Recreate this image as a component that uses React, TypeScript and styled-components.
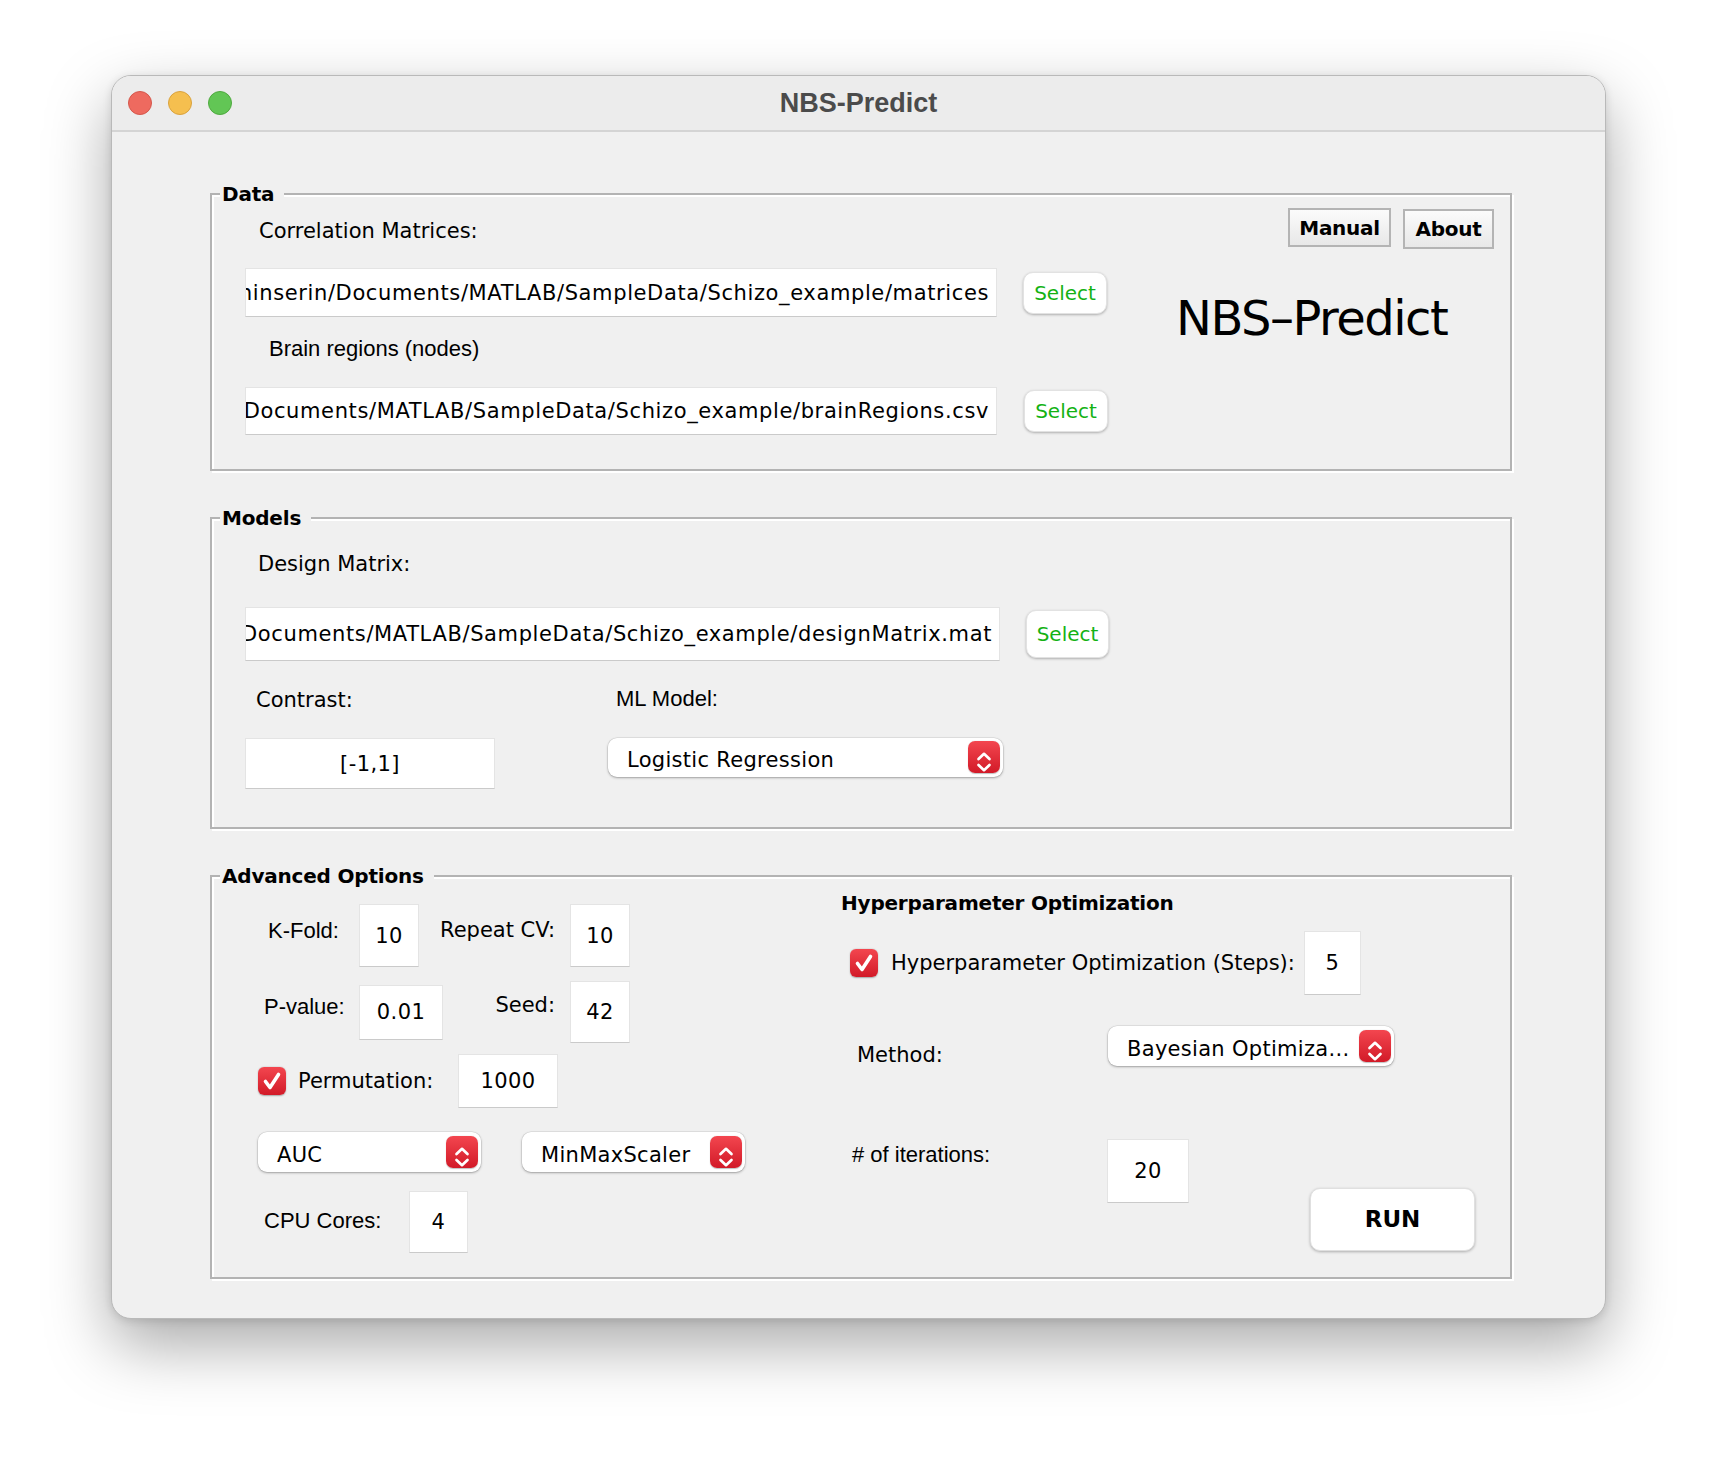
import React from "react";
import styled, { createGlobalStyle } from "styled-components";

const GlobalStyle = createGlobalStyle`
  html, body { margin: 0; padding: 0; background: #ffffff; }
  body { font-family: "DejaVu Sans", "Liberation Sans", sans-serif; color: #000; }
  * { box-sizing: border-box; }
`;

const Page = styled.div`
  width: 1716px;
  height: 1466px;
  padding: 75px 0 0 111px;
  overflow: hidden;
`;

const Window = styled.div`
  width: 1495px;
  height: 1244px;
  background: #f0f0f0;
  border: 1px solid #b9b9b9;
  border-radius: 20px;
  box-shadow: 0 26px 64px rgba(0, 0, 0, 0.34), 0 2px 8px rgba(0, 0, 0, 0.12);
  overflow: hidden;
  display: flex;
  flex-direction: column;
`;

const TitleBar = styled.div`
  flex-shrink: 0;
  height: 56px;
  display: grid;
  grid-template-columns: 1fr auto 1fr;
  align-items: center;
  padding: 0 16px;
  background: #ececec;
  border-bottom: 2px solid #d4d4d4;
`;

const Lights = styled.div`
  display: flex;
  gap: 16px;
`;

const Light = styled.span<{ $bg: string; $edge: string }>`
  width: 24px;
  height: 24px;
  border-radius: 50%;
  background: ${(p) => p.$bg};
  border: 1px solid ${(p) => p.$edge};
`;

const WindowTitle = styled.div`
  font-family: "Liberation Sans", Arial, sans-serif;
  font-weight: 700;
  font-size: 27px;
  color: #4b4b4b;
`;

const Content = styled.div`
  flex: 1;
  padding: 61px 93px 0 98px;
  display: flex;
  flex-direction: column;
  gap: 46px;
`;

const Box = styled.section<{ $h: number }>`
  position: relative;
  flex-shrink: 0;
  height: ${(p) => p.$h}px;
  border: 2px solid #b3b3b3;
  box-shadow: 2px 2px 0 #ffffff, inset 2px 2px 0 #ffffff;
`;

const Legend = styled.h2`
  position: absolute;
  top: -13px;
  left: 8px;
  margin: 0;
  padding: 0 10px 0 2px;
  background: #f0f0f0;
  font-family: "DejaVu Sans", sans-serif;
  font-weight: 700;
  font-size: 20px;
  line-height: 25px;
  letter-spacing: -0.2px;
`;

const Label = styled.div<{ $helv?: boolean; $mt?: number; $ml?: number; $w?: number; $end?: boolean; $mr?: number }>`
  font-family: ${(p) => (p.$helv ? '"Liberation Sans", Arial, sans-serif' : '"DejaVu Sans", sans-serif')};
  font-size: ${(p) => (p.$helv ? 22 : 21)}px;
  letter-spacing: 0;
  line-height: 25px;
  white-space: nowrap;
  margin-top: ${(p) => p.$mt ?? 0}px;
  margin-left: ${(p) => p.$ml ?? 0}px;
  margin-right: ${(p) => p.$mr ?? 0}px;
  ${(p) => (p.$w ? `width: ${p.$w}px; flex-shrink: 0;` : "")}
  ${(p) => (p.$end ? "justify-self: end;" : "")}
  align-self: start;
`;

const DataBody = styled.div`
  display: flex;
  height: 100%;
  padding: 0 16px 0 33px;
`;

const PathColumn = styled.div`
  width: 862px;
  flex-shrink: 0;
  display: flex;
  flex-direction: column;
`;

const PathRow = styled.div<{ $mt: number; $gap?: number }>`
  display: flex;
  align-items: center;
  gap: ${(p) => p.$gap ?? 26}px;
  margin-top: ${(p) => p.$mt}px;
`;

const PathField = styled.div<{ $w: number; $h: number }>`
  width: ${(p) => p.$w}px;
  height: ${(p) => p.$h}px;
  flex-shrink: 0;
  background: #ffffff;
  border: 1px solid #e4e4e4;
  border-bottom-color: #cacaca;
  display: flex;
  justify-content: flex-end;
  align-items: center;
  overflow: hidden;
  padding-right: 7px;
  font-size: 21px;
  letter-spacing: 0.62px;
  white-space: nowrap;
  & > span { flex-shrink: 0; }
`;

const SelectButton = styled.button<{ $w?: number; $h?: number }>`
  width: ${(p) => p.$w ?? 84}px;
  height: ${(p) => p.$h ?? 42}px;
  flex-shrink: 0;
  border: 1px solid #e2e2e2;
  border-radius: 10px;
  background: #ffffff;
  box-shadow: 0 1px 2.5px rgba(0, 0, 0, 0.28);
  color: #14b214;
  font-family: "DejaVu Sans", sans-serif;
  font-size: 20px;
  padding: 0;
`;

const Aside = styled.div`
  flex: 1;
  display: flex;
  flex-direction: column;
`;

const HelpButtons = styled.div`
  margin-top: 13px;
  height: 41px;
  display: flex;
  justify-content: flex-end;
  align-items: flex-start;
  gap: 12px;
`;

const HelpButton = styled.button<{ $w: number; $h: number; $mt?: number }>`
  width: ${(p) => p.$w}px;
  height: ${(p) => p.$h}px;
  margin-top: ${(p) => p.$mt ?? 0}px;
  padding: 0;
  border: 2px solid #b4b4b4;
  border-radius: 0;
  background: linear-gradient(#fbfbfb, #e8e8e8);
  font-family: "DejaVu Sans", sans-serif;
  font-weight: 700;
  font-size: 20px;
  letter-spacing: -0.3px;
  color: #000;
`;

const BigTitle = styled.div`
  margin-top: 41px;
  margin-left: 69px;
  font-family: "DejaVu Sans", sans-serif;
  font-size: 48px;
  line-height: 56px;
  letter-spacing: -1.5px;
  white-space: nowrap;
`;

const ModelsBody = styled.div`
  display: flex;
  flex-direction: column;
  padding-left: 33px;
`;

const ModelRow = styled.div`
  display: flex;
`;

const Column = styled.div<{ $w?: number; $ml?: number }>`
  display: flex;
  flex-direction: column;
  ${(p) => (p.$w ? `width: ${p.$w}px;` : "")}
  margin-left: ${(p) => p.$ml ?? 0}px;
`;

const NumField = styled.div<{ $w: number; $h: number; $mt?: number }>`
  width: ${(p) => p.$w}px;
  height: ${(p) => p.$h}px;
  margin-top: ${(p) => p.$mt ?? 0}px;
  flex-shrink: 0;
  background: #ffffff;
  border: 1px solid #e4e4e4;
  border-bottom-color: #cacaca;
  display: flex;
  align-items: center;
  justify-content: center;
  font-size: 21px;
  letter-spacing: 0.4px;
  align-self: center;
`;

const ComboBox = styled.div<{ $w: number; $h?: number; $mt?: number }>`
  width: ${(p) => p.$w}px;
  height: ${(p) => p.$h ?? 40}px;
  margin-top: ${(p) => p.$mt ?? 0}px;
  flex-shrink: 0;
  display: flex;
  align-items: center;
  justify-content: space-between;
  padding: 0 3px 0 19px;
  background: #ffffff;
  border-radius: 9px;
  box-shadow: 0 1px 2.5px rgba(0, 0, 0, 0.3), 0 0 0 0.5px rgba(0, 0, 0, 0.1);
  font-size: 21px;
  letter-spacing: 0.3px;
  white-space: nowrap;
  & > span { padding-top: 5px; }
`;

const StepperBox = styled.span`
  width: 32px;
  height: 32px;
  flex-shrink: 0;
  border-radius: 7px;
  background: linear-gradient(#f3464f, #d21a28);
  display: flex;
  box-shadow: 0 0.5px 1px rgba(0, 0, 0, 0.25);
`;

const CheckBoxBox = styled.span<{ $ml?: number }>`
  width: 28px;
  height: 28px;
  flex-shrink: 0;
  margin-left: ${(p) => p.$ml ?? 0}px;
  border-radius: 6px;
  background: linear-gradient(#f3464f, #d21a28);
  box-shadow: 0 0.5px 1.5px rgba(0, 0, 0, 0.3);
  display: flex;
`;

const AdvancedBody = styled.div`
  display: flex;
  height: 100%;
`;

const LeftPane = styled.div`
  width: 629px;
  flex-shrink: 0;
  padding: 27px 0 0 33px;
  display: flex;
  flex-direction: column;
`;

const ParamGrid = styled.div`
  display: grid;
  grid-template-columns: 114px 84px 127px 60px;
  grid-template-rows: 63px 62px;
  row-gap: 14px;
`;

const FlexRow = styled.div<{ $mt: number; $ml?: number; $gap?: number; $start?: boolean; $h?: number }>`
  display: flex;
  align-items: ${(p) => (p.$start ? "flex-start" : "center")};
  margin-top: ${(p) => p.$mt}px;
  margin-left: ${(p) => p.$ml ?? 0}px;
  gap: ${(p) => p.$gap ?? 0}px;
  ${(p) => (p.$h ? `height: ${p.$h}px;` : "")}
`;

const RightPane = styled.div`
  flex: 1;
  padding-top: 14px;
  display: flex;
  flex-direction: column;
`;

const SubTitle = styled.h3`
  margin: 0;
  font-family: "DejaVu Sans", sans-serif;
  font-weight: 700;
  font-size: 20px;
  line-height: 25px;
  letter-spacing: -0.2px;
`;

const RunButton = styled.button<{ $ml: number; $mt: number }>`
  width: 165px;
  height: 63px;
  margin-left: ${(p) => p.$ml}px;
  margin-top: ${(p) => p.$mt}px;
  flex-shrink: 0;
  padding: 0;
  border: 1px solid #e0e0e0;
  border-radius: 10px;
  background: #ffffff;
  box-shadow: 0 1px 3px rgba(0, 0, 0, 0.28);
  font-family: "DejaVu Sans", sans-serif;
  font-weight: 700;
  font-size: 23px;
  color: #000;
`;

const Stepper = () => (
  <StepperBox>
    <svg width="32" height="32" viewBox="0 0 32 32">
      <path d="M10.5 13 L16 7.8 L21.5 13" fill="none" stroke="#fff" strokeWidth="2.7" strokeLinecap="round" strokeLinejoin="round" />
      <path d="M10.5 19 L16 24.2 L21.5 19" fill="none" stroke="#fff" strokeWidth="2.7" strokeLinecap="round" strokeLinejoin="round" />
    </svg>
  </StepperBox>
);

const Combo = ({ w, h, mt, children }: { w: number; h?: number; mt?: number; children: React.ReactNode }) => (
  <ComboBox $w={w} $h={h} $mt={mt}>
    <span>{children}</span>
    <Stepper />
  </ComboBox>
);

const CheckBox = ({ ml }: { ml?: number }) => (
  <CheckBoxBox $ml={ml}>
    <svg width="28" height="28" viewBox="0 0 28 28">
      <path d="M7.5 14.5 L12 20.5 L20.5 7.5" fill="none" stroke="#fff" strokeWidth="3.6" strokeLinecap="round" strokeLinejoin="round" />
    </svg>
  </CheckBoxBox>
);

export default function App() {
  return (
    <>
      <GlobalStyle />
      <Page>
        <Window>
          <TitleBar>
            <Lights>
              <Light $bg="#ee6a5f" $edge="#d4574c" />
              <Light $bg="#f5bf4f" $edge="#d9a23e" />
              <Light $bg="#62c655" $edge="#4fa93f" />
            </Lights>
            <WindowTitle>NBS-Predict</WindowTitle>
            <div />
          </TitleBar>
          <Content>
            <Box $h={278}>
              <Legend>Data</Legend>
              <DataBody>
                <PathColumn>
                  <Label $mt={23.5} $ml={14}>Correlation Matrices:</Label>
                  <PathRow $mt={24.5}>
                    <PathField $w={752} $h={49}>
                      <span>/Users/aminserin/Documents/MATLAB/SampleData/Schizo_example/matrices</span>
                    </PathField>
                    <SelectButton>Select</SelectButton>
                  </PathRow>
                  <Label $helv $mt={18.6} $ml={24}>Brain regions (nodes)</Label>
                  <PathRow $mt={26.4} $gap={27}>
                    <PathField $w={752} $h={48}>
                      <span>/Users/aminserin/Documents/MATLAB/SampleData/Schizo_example/brainRegions.csv</span>
                    </PathField>
                    <SelectButton>Select</SelectButton>
                  </PathRow>
                </PathColumn>
                <Aside>
                  <HelpButtons>
                    <HelpButton $w={103} $h={39}>Manual</HelpButton>
                    <HelpButton $w={91} $h={40} $mt={1}>About</HelpButton>
                  </HelpButtons>
                  <BigTitle>NBS–Predict</BigTitle>
                </Aside>
              </DataBody>
            </Box>

            <Box $h={312}>
              <Legend>Models</Legend>
              <ModelsBody>
                <Label $mt={32.5} $ml={13}>Design Matrix:</Label>
                <PathRow $mt={30.5}>
                  <PathField $w={755} $h={54}>
                    <span>/Users/aminserin/Documents/MATLAB/SampleData/Schizo_example/designMatrix.mat</span>
                  </PathField>
                  <SelectButton $w={83} $h={48}>Select</SelectButton>
                </PathRow>
                <ModelRow>
                  <Column $w={250}>
                    <Label $mt={26.5} $ml={11}>Contrast:</Label>
                    <NumField $mt={25.5} $w={250} $h={51}>[-1,1]</NumField>
                  </Column>
                  <Column $ml={113}>
                    <Label $helv $mt={24.6} $ml={8}>ML Model:</Label>
                    <Combo w={395} h={39} mt={27.4}>Logistic Regression</Combo>
                  </Column>
                </ModelRow>
              </ModelsBody>
            </Box>

            <Box $h={404}>
              <Legend>Advanced Options</Legend>
              <AdvancedBody>
                <LeftPane>
                  <ParamGrid>
                    <Label $helv $ml={23} $mt={13.6}>K-Fold:</Label>
                    <NumField $w={60} $h={63}>10</NumField>
                    <Label $end $mr={15} $mt={13.5}>Repeat CV:</Label>
                    <NumField $w={60} $h={63}>10</NumField>
                    <Label $helv $ml={19} $mt={12.6}>P-value:</Label>
                    <NumField $w={84} $h={55}>0.01</NumField>
                    <Label $end $mr={15} $mt={11.5}>Seed:</Label>
                    <NumField $w={60} $h={62}>42</NumField>
                  </ParamGrid>
                  <FlexRow $mt={11} $ml={13} $h={54}>
                    <CheckBox />
                    <Label $ml={12} $w={160} style={{ alignSelf: "center" }}>Permutation:</Label>
                    <NumField $w={100} $h={54}>1000</NumField>
                  </FlexRow>
                  <FlexRow $mt={24} $ml={13} $gap={41}>
                    <Combo w={223}>AUC</Combo>
                    <Combo w={223}>MinMaxScaler</Combo>
                  </FlexRow>
                  <FlexRow $mt={19} $start>
                    <Label $helv $ml={19} $mt={16.6} $w={145}>CPU Cores:</Label>
                    <NumField $w={59} $h={62}>4</NumField>
                  </FlexRow>
                </LeftPane>
                <RightPane>
                  <SubTitle>Hyperparameter Optimization</SubTitle>
                  <FlexRow $mt={15} $h={64}>
                    <CheckBox ml={9} />
                    <Label $ml={13} $w={413} style={{ alignSelf: "center" }}>Hyperparameter Optimization (Steps):</Label>
                    <NumField $w={57} $h={64}>5</NumField>
                  </FlexRow>
                  <FlexRow $mt={31} $start>
                    <Label $ml={16} $mt={16.5} $w={251}>Method:</Label>
                    <Combo w={286}>Bayesian Optimiza...</Combo>
                  </FlexRow>
                  <FlexRow $mt={71} $start>
                    <Label $helv $ml={11} $mt={3.6} $w={255}># of iterations:</Label>
                    <NumField $w={82} $h={64} style={{ alignSelf: "flex-start" }}>20</NumField>
                    <RunButton $ml={121} $mt={49}>RUN</RunButton>
                  </FlexRow>
                </RightPane>
              </AdvancedBody>
            </Box>
          </Content>
        </Window>
      </Page>
    </>
  );
}
